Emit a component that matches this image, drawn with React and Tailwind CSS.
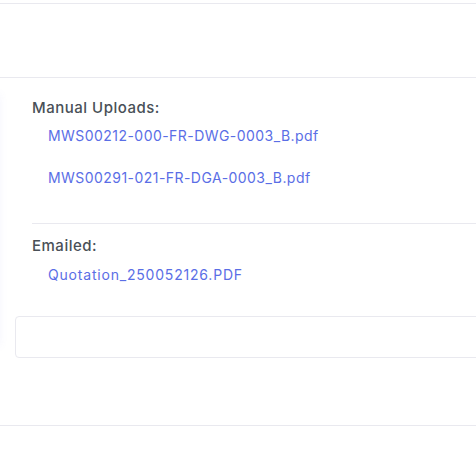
export default function App() {
  const uploads = ["MWS00212-000-FR-DWG-0003_B.pdf", "MWS00291-021-FR-DGA-0003_B.pdf"];
  return (
    <div
      className="w-[476px] h-[460px] overflow-hidden bg-white text-[#495057]"
      style={{ fontFamily: "Inter, 'Noto Sans', sans-serif" }}
    >
      <div className="mt-[3px] h-[75px] border-y border-[#e9e9ef]" />
      <div className="relative flex">
        <div className="absolute left-[-10px] top-[16px] h-[252px] w-[10px] shadow-[0_0_8px_rgba(110,110,230,0.07)]" />
        <div className="flex-1 pl-[32px] pt-[19px]">
          <h5 className="text-[15px] font-medium leading-[21px] tracking-[0.5px]">Manual Uploads:</h5>
          <div className="pl-[16px] pt-[7px]">
            {uploads.map((f) => (
              <a key={f} href="#" className="block h-[42px] text-[14px] leading-[21px] tracking-[0.45px] text-[#5a6ee6]">
                {f}
              </a>
            ))}
          </div>
          <div className="mt-[14px] border-t border-[#e9e9ef]" />
          <h5 className="pt-[11px] text-[15px] font-medium leading-[21px] tracking-[0.5px]">Emailed:</h5>
          <div className="pl-[16px] pt-[8px]">
            <a href="#" className="block text-[14px] leading-[21px] tracking-[0.8px] text-[#5a6ee6]">
              Quotation_250052126.PDF
            </a>
          </div>
        </div>
      </div>
      <div className="ml-[15px] mr-[-10px] mt-[31px] h-[42px] rounded-[4px] border border-[#e9e9ef]" />
      <div className="mt-[67px] border-t border-[#e9e9ef]" />
    </div>
  );
}
